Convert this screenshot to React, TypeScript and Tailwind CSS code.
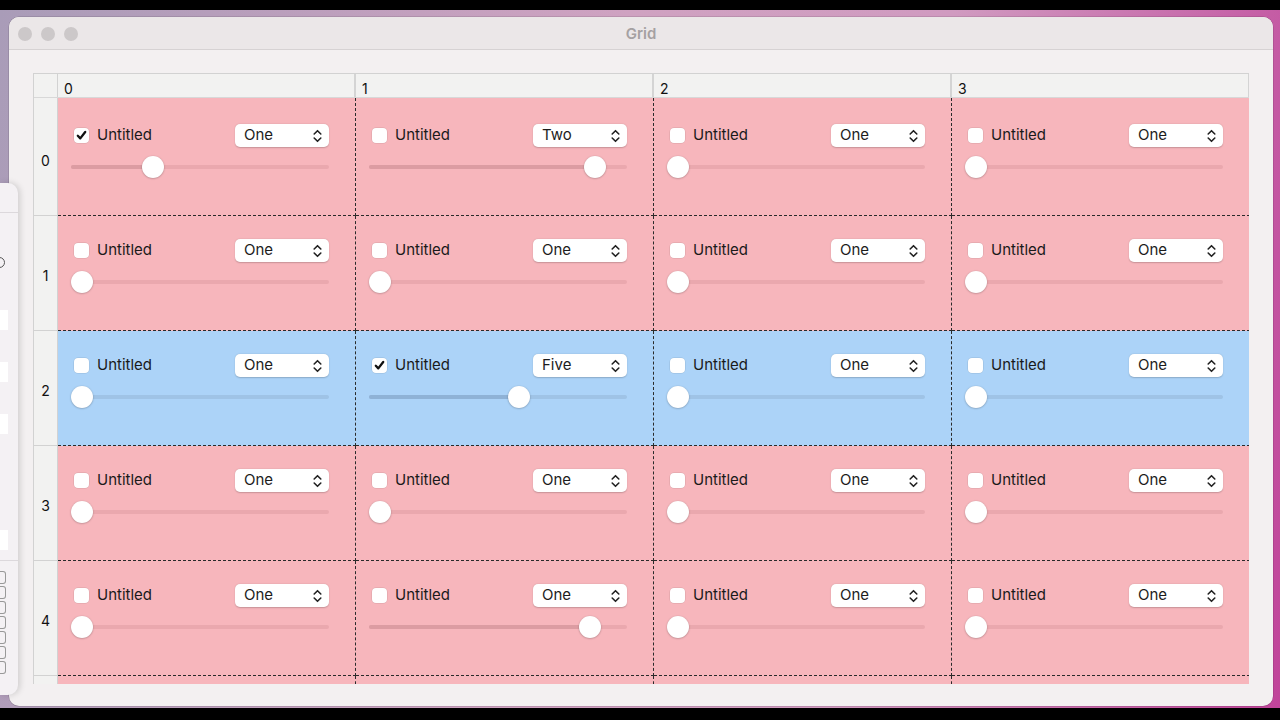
import React from "react";

type Cell = { checked: boolean; choice: string; value: number };

const cols = [0, 1, 2, 3];
const rows = [0, 1, 2, 3, 4];

function cellFor(r: number, c: number): Cell {
    if (r === 0 && c === 0) return { checked: true, choice: "One", value: 0.3 };
    if (r === 0 && c === 1) return { checked: false, choice: "Two", value: 0.91 };
    if (r === 2 && c === 1) return { checked: true, choice: "Five", value: 0.59 };
    if (r === 4 && c === 1) return { checked: false, choice: "One", value: 0.89 };
    return { checked: false, choice: "One", value: 0 };
}

function Checkbox({ checked }: { checked: boolean }) {
    return (
        <div className="w-[15px] h-[15px] rounded-[4px] bg-white shadow-[0_0_0_0.5px_rgba(0,0,0,0.12)] flex items-center justify-center">
            {checked && (
                <svg width="11" height="11" viewBox="0 0 11 11">
                    <path d="M1.8 5.8 L4.3 8.4 L9.2 2" fill="none" stroke="#111" strokeWidth="2.3" strokeLinecap="round" strokeLinejoin="round" />
                </svg>
            )}
        </div>
    );
}

function Popup({ label }: { label: string }) {
    return (
        <div className="w-[94px] h-[23px] rounded-[5px] bg-white shadow-[0_0.5px_1.5px_rgba(0,0,0,0.2)] flex items-center justify-between pl-[9px] pr-[7px]">
            <span className="text-[15px] text-[#1c1c1c]">{label}</span>
            <svg width="9" height="14" viewBox="0 0 9 14">
                <path d="M1.2 5 L4.5 1.7 L7.8 5 M1.2 9 L4.5 12.3 L7.8 9" fill="none" stroke="#222" strokeWidth="1.6" strokeLinecap="round" strokeLinejoin="round" />
            </svg>
        </div>
    );
}

function Slider({ value, blue }: { value: number; blue: boolean }) {
    const center = 11 + value * 236;
    return (
        <div className="relative h-[22px] w-[258px]">
            <div className={`absolute left-0 right-0 top-[9px] h-[4px] rounded-full ${blue ? "bg-[#9fc3e6]" : "bg-[#eaa8ae]"}`} />
            <div className={`absolute left-0 top-[9px] h-[4px] rounded-full ${blue ? "bg-[#8fb2d6]" : "bg-[#dc9ca2]"}`} style={{ width: center }} />
            <div
                className="absolute top-0 w-[22px] h-[22px] rounded-full bg-white shadow-[0_0.5px_2px_rgba(0,0,0,0.3)]"
                style={{ left: center - 11 }}
            />
        </div>
    );
}

function GridCell({ r, c }: { r: number; c: number }) {
    const cell = cellFor(r, c);
    const blue = r === 2;
    return (
        <div
            className={`w-[298px] shrink-0 border-r border-b border-dashed border-[#2a2a2a] pl-[13px] pr-[26px] flex flex-col ${r === 0 ? "h-[118px] pt-[26px]" : "h-[115px] pt-[23px]"} ${blue ? "bg-[#acd3f8]" : "bg-[#f7b6bc]"}`}
        >
            <div className="flex items-center justify-between h-[23px]">
                <div className="flex items-center gap-[8px] pl-[3px]">
                    <Checkbox checked={cell.checked} />
                    <span className="text-[15px] text-[#1a1a1a]">Untitled</span>
                </div>
                <Popup label={cell.choice} />
            </div>
            <div className="mt-[9px]">
                <Slider value={cell.value} blue={blue} />
            </div>
        </div>
    );
}

export default function App() {
    return (
        <div className="w-[1280px] h-[720px] bg-black overflow-hidden relative font-['Inter',sans-serif]">
            <div className="mt-[10px] h-[698px] bg-[linear-gradient(100deg,#a99cb8_0%,#cfa2c1_45%,#d09ac0_68%,#c0449a_100%)] pt-[7px] pl-[9px]">
                <div className="w-[1264px] h-[689px] rounded-[10px] bg-[#f3f0f1] overflow-hidden shadow-[0_0_0_0.5px_rgba(0,0,0,0.2)] flex flex-col">
                    <div className="h-[33px] shrink-0 bg-[#ebe7e8] border-b border-[#d6d2d3] flex items-center relative">
                        <div className="flex gap-[9px] pl-[9px] pt-[1px]">
                            <div className="w-[14px] h-[14px] rounded-full bg-[#ccc8c9]" />
                            <div className="w-[14px] h-[14px] rounded-full bg-[#ccc8c9]" />
                            <div className="w-[14px] h-[14px] rounded-full bg-[#ccc8c9]" />
                        </div>
                        <div className="absolute inset-0 pt-[2px] flex items-center justify-center text-[15px] font-semibold text-[#a5a1a2]">Grid</div>
                    </div>
                    <div className="pl-[24px] pt-[23px]">
                        <div className="w-[1216px] h-[611px] overflow-hidden border-t border-l border-[#d2d2d2] bg-[#f2f2f1]">
                            <div className="flex h-[24px] border-b border-[#d8d8d8]">
                                <div className="w-[24px] shrink-0 border-r border-[#d2d2d2]" />
                                {cols.map((c) => (
                                    <div key={c} className="w-[298px] shrink-0 border-r-2 border-[#d4d4d4] pl-[6px] pt-[5px] flex items-center text-[14px] text-[#111]">
                                        {c}
                                    </div>
                                ))}
                            </div>
                            {rows.map((r) => (
                                <div key={r} className="flex">
                                    <div className={`w-[24px] shrink-0 border-r border-b border-[#d2d2d2] flex items-center justify-center text-[14px] text-[#111] ${r === 0 ? "h-[118px] pt-[8px]" : "h-[115px] pt-[4px]"}`}>
                                        {r}
                                    </div>
                                    {cols.map((c) => (
                                        <GridCell key={c} r={r} c={c} />
                                    ))}
                                </div>
                            ))}
                            <div className="flex">
                                <div className="w-[24px] h-[40px] shrink-0 border-r border-[#d2d2d2]" />
                                {cols.map((c) => (
                                    <div key={c} className="w-[298px] h-[40px] shrink-0 border-r border-dashed border-[#2a2a2a] bg-[#f7b6bc]" />
                                ))}
                            </div>
                        </div>
                    </div>
                </div>
            </div>

            {/* inspector panel peeking in from the left */}
            <div className="absolute left-0 top-[183px] w-[18px] h-[512px] bg-[#f4f1f4] rounded-r-[10px] shadow-[2px_0_6px_rgba(0,0,0,0.15)] flex flex-col">
                <div className="h-[30px] border-b border-[#dcd8dc]" />
                <div className="mt-[44px] ml-[-6px] w-[11px] h-[11px] rounded-full border border-[#555]" />
                <div className="mt-[42px] w-[8px] h-[20px] bg-white" />
                <div className="mt-[32px] w-[8px] h-[20px] bg-white" />
                <div className="mt-[32px] w-[8px] h-[20px] bg-white" />
                <div className="mt-[96px] w-[8px] h-[20px] bg-white" />
                <div className="mt-[10px] border-t border-[#dcd8dc]" />
                <div className="mt-[10px] flex flex-col gap-[2px]">
                    {[0, 1, 2, 3, 4, 5, 6].map((i) => (
                        <div key={i} className="w-[6px] h-[13px] rounded-r-[3px] border border-l-0 border-[#999]" />
                    ))}
                </div>
            </div>
        </div>
    );
}
